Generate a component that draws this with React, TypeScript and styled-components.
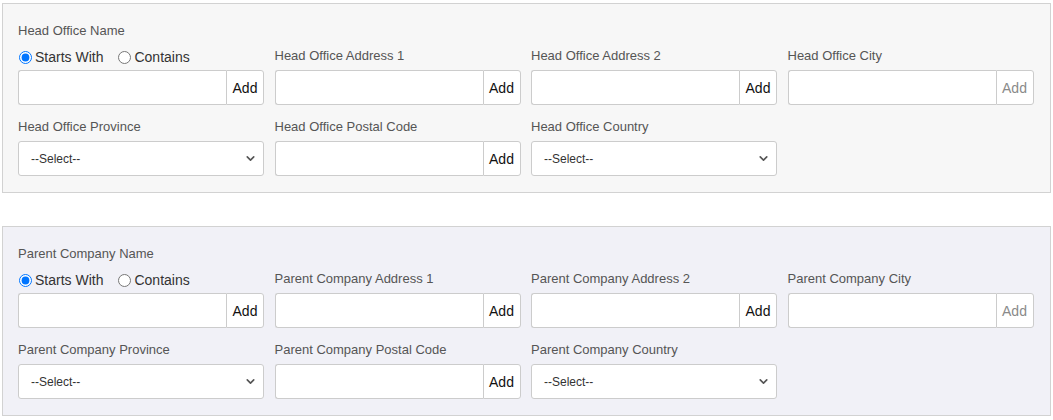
import React from "react";
import styled, { createGlobalStyle } from "styled-components";
import { ChevronDown } from "lucide-react";

const GlobalStyle = createGlobalStyle`
  body {
    margin: 0;
    font-family: "Liberation Sans", Arial, sans-serif;
    background: #fff;
  }
`;

const Page = styled.div`
  padding: 3px 2px 0 2px;
  width: 1049px;
  display: flex;
  flex-direction: column;
  gap: 33px;
`;

const Panel = styled.div<{ tint: string }>`
  background: ${p => p.tint};
  border: 1px solid #d2d2d2;
  padding: 18px 15px 16px 15px;
  display: grid;
  grid-template-columns: repeat(4, 246px);
  column-gap: 10.5px;
  row-gap: 13px;
  align-items: end;
`;

const Field = styled.div`
  display: flex;
  flex-direction: column;
`;

const Label = styled.label`
  font-size: 13px;
  line-height: 18px;
  color: #555;
  margin-bottom: 5px;
`;

const NameLabel = styled(Label)`
  margin-bottom: 7px;
`;

const RadioRow = styled.div`
  display: flex;
  align-items: center;
  height: 20px;
  margin-bottom: 3px;
`;

const RadioOption = styled.label`
  display: flex;
  align-items: center;
  font-size: 14px;
  color: #333;
  margin-right: 14px;

  input {
    margin: 0 3px 0 1px;
    width: 13px;
    height: 13px;
  }
`;

const InputGroup = styled.div`
  display: flex;
  height: 35px;
`;

const TextInput = styled.input`
  flex: 1;
  min-width: 0;
  box-sizing: border-box;
  height: 35px;
  border: 1px solid #ccc;
  border-right: none;
  border-radius: 3px 0 0 3px;
  background: #fff;
  padding: 0 10px;
  font: inherit;
  font-size: 14px;
`;

const AddButton = styled.button<{ muted?: boolean }>`
  width: 38px;
  box-sizing: border-box;
  height: 35px;
  border: 1px solid #ccc;
  border-radius: 0 3px 3px 0;
  background: #fff;
  padding: 0;
  font-family: "Liberation Sans", Arial, sans-serif;
  font-size: 14px;
  color: ${p => (p.muted ? "#8a8a8a" : "#111")};
`;

const SelectWrap = styled.div`
  position: relative;
  height: 35px;
`;

const Select = styled.select`
  appearance: none;
  width: 100%;
  height: 35px;
  box-sizing: border-box;
  border: 1px solid #ccc;
  border-radius: 3px;
  background: #fff;
  padding: 0 12px;
  font-family: "Liberation Sans", Arial, sans-serif;
  font-size: 12px;
  color: #333;
`;

const Chevron = styled(ChevronDown)`
  position: absolute;
  right: 7px;
  top: 11px;
  pointer-events: none;
  color: #555;
`;

interface ISection {
  prefix: string;
  tint: string;
  group: string;
}

const AddInput = ({ muted }: { muted?: boolean }) => (
  <InputGroup>
    <TextInput type="text" />
    <AddButton muted={muted}>Add</AddButton>
  </InputGroup>
);

const SelectBox = () => (
  <SelectWrap>
    <Select defaultValue="">
      <option value="">--Select--</option>
    </Select>
    <Chevron size={13} strokeWidth={3} />
  </SelectWrap>
);

const SearchSection = ({ prefix, tint, group }: ISection) => (
  <Panel tint={tint}>
    <Field>
      <NameLabel>{prefix} Name</NameLabel>
      <RadioRow>
        <RadioOption>
          <input type="radio" name={group} defaultChecked={true} />
          Starts With
        </RadioOption>
        <RadioOption>
          <input type="radio" name={group} />
          Contains
        </RadioOption>
      </RadioRow>
      <AddInput />
    </Field>
    <Field>
      <Label>{prefix} Address 1</Label>
      <AddInput />
    </Field>
    <Field>
      <Label>{prefix} Address 2</Label>
      <AddInput />
    </Field>
    <Field>
      <Label>{prefix} City</Label>
      <AddInput muted={true} />
    </Field>
    <Field>
      <Label>{prefix} Province</Label>
      <SelectBox />
    </Field>
    <Field>
      <Label>{prefix} Postal Code</Label>
      <AddInput />
    </Field>
    <Field>
      <Label>{prefix} Country</Label>
      <SelectBox />
    </Field>
  </Panel>
);

export default function App() {
  return (
    <>
      <GlobalStyle />
      <Page>
        <SearchSection prefix="Head Office" tint="#f7f7f7" group="headOffice" />
        <SearchSection prefix="Parent Company" tint="#f1f1f7" group="parentCompany" />
      </Page>
    </>
  );
}
